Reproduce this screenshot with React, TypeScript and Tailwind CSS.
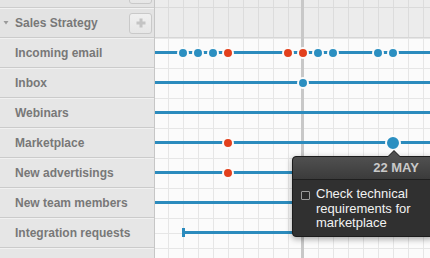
import React from "react";

type Dot = { x: number; c: "b" | "r" | "B" };
type Row = { name: string; dots?: Dot[]; start?: number; line?: boolean };

const rows: Row[] = [
  {
    name: "Incoming email",
    line: true,
    dots: [
      { x: 28, c: "b" },
      { x: 43, c: "b" },
      { x: 58, c: "b" },
      { x: 73, c: "r" },
      { x: 133, c: "r" },
      { x: 147.5, c: "r" },
      { x: 162.5, c: "b" },
      { x: 177.5, c: "b" },
      { x: 222.5, c: "b" },
      { x: 237.5, c: "b" },
    ],
  },
  { name: "Inbox", line: true, dots: [{ x: 147.5, c: "b" }] },
  { name: "Webinars", line: true },
  { name: "Marketplace", line: true, dots: [{ x: 73, c: "r" }, { x: 238, c: "B" }] },
  { name: "New advertisings", line: true, dots: [{ x: 73, c: "r" }] },
  { name: "New team members", line: true },
  { name: "Integration requests", line: true, start: 27 },
];

const PlusButton = () => (
  <div className="flex h-[21px] w-[23px] items-center justify-center rounded-[3px] border border-[#c9c9c9] bg-[linear-gradient(#f0f0f0,#e6e6e6)]">
    <svg width="10" height="10" viewBox="0 0 10 10">
      <rect x="3.5" y="0.5" width="3" height="9" fill="#c4c4c4" />
      <rect x="0.5" y="3.5" width="9" height="3" fill="#c4c4c4" />
    </svg>
  </div>
);

const gridBg =
  "bg-[linear-gradient(to_right,#e6e6e6_1px,transparent_1px),linear-gradient(to_bottom,#e6e6e6_1px,transparent_1px)] bg-[size:15px_15px] bg-[position:13px_0px]";

export default function App() {
  return (
    <div className="relative flex h-[258px] w-[430px] overflow-hidden bg-[#f2f2f2] font-['Liberation_Sans',Arial,sans-serif]">
      {/* Sidebar */}
      <div className="flex w-[155px] shrink-0 flex-col border-r border-[#c6c6c6] bg-[#e6e6e6]">
        <div className="-mt-[22px] flex h-[30px] shrink-0 items-center justify-end border-b border-[#cdcdcd] bg-[#e4e4e4] pr-[2px] pt-[1px]">
          <PlusButton />
        </div>
        <div className="flex h-[30px] shrink-0 items-center border-b border-[#cbcbcb] border-t border-t-[#f2f2f2] bg-[#e3e3e3] pr-[2px]">
          <svg width="15" height="10" viewBox="0 0 15 10" className="shrink-0">
            <path d="M3.5 3 L8.5 3 L6 6.5 Z" fill="#9a9a9a" />
          </svg>
          <span className="flex-1 text-[12px] font-bold text-[#787878]">Sales Strategy</span>
          <PlusButton />
        </div>
        {rows.map((r) => (
          <div
            key={r.name}
            className="flex h-[30px] shrink-0 items-center border-b border-[#cbcbcb] border-t border-t-[#f1f1f1] pl-[15px] text-[12px] font-bold text-[#787878]"
          >
            {r.name}
          </div>
        ))}
        <div className="h-[30px] shrink-0 border-t border-t-[#f1f1f1]" />
      </div>

      {/* Timeline */}
      <div className="relative flex flex-1 flex-col">
        {/* header */}
        <div className="h-[38px] shrink-0 border-b border-[#d6d6d6] bg-[#ececec] bg-[linear-gradient(to_right,#dcdcdc_1px,transparent_1px)] bg-[size:15px_15px] bg-[position:13px_0px]">
          <div className="h-[8px] border-b border-[#dadada]" />
        </div>
        {/* rows */}
        <div className={`relative flex flex-1 flex-col bg-[#fbfbfb] ${gridBg}`}>
          {/* today line */}
          <div className="absolute -top-[38px] bottom-0 left-[146px] w-[3px] bg-[#c8c8c8]" />
          {rows.map((r) => (
            <div key={r.name} className="relative h-[30px] shrink-0">
              {r.line && (
                <div
                  className="absolute right-0 top-[13px] h-[3px] bg-[#2b8bbd]"
                  style={{ left: r.start ?? 0 }}
                />
              )}
              {r.start !== undefined && (
                <div
                  className="absolute top-[10px] h-[9px] w-[3px] bg-[#2b8bbd]"
                  style={{ left: r.start }}
                />
              )}
              {r.dots?.map((d, i) =>
                d.c === "B" ? (
                  <div
                    key={i}
                    className="absolute top-[6.5px] h-[16px] w-[16px] rounded-full border-2 border-[#fbfbfb] bg-[#2b8fc1]"
                    style={{ left: d.x - 8 }}
                  />
                ) : (
                  <div
                    key={i}
                    className={`absolute top-[8.5px] h-[12px] w-[12px] rounded-full border-2 border-[#fbfbfb] ${
                      d.c === "r" ? "bg-[#e2401d]" : "bg-[#2b8fc1]"
                    }`}
                    style={{ left: d.x - 6 }}
                  />
                )
              )}
            </div>
          ))}
        </div>

        {/* tooltip */}
        <div className="absolute left-[137px] top-[156px] w-[142px] rounded-[4px] border border-[#1c1c1c] bg-[#303030] shadow-[0_2px_6px_rgba(0,0,0,0.35)]">
          <div className="absolute -top-[7px] left-[94px] h-0 w-0 border-x-[7px] border-b-[7px] border-x-transparent border-b-[#1c1c1c]" />
          <div className="absolute -top-[6px] left-[95px] h-0 w-0 border-x-[6px] border-b-[6px] border-x-transparent border-b-[#505050]" />
          <div className="flex h-[23px] items-center justify-end rounded-t-[4px] border-b border-[#1f1f1f] bg-[linear-gradient(#505050,#3b3b3b)] pr-[14px] text-[13px] font-bold text-[#c9c9c9]">
            22 MAY
          </div>
          <div className="flex items-start gap-[6px] pb-[5px] pl-[8px] pt-[7px]">
            <div className="mt-[4px] h-[9px] w-[9px] shrink-0 rounded-[1px] border border-[#9a9a9a] bg-[#2a2a2a]" />
            <div className="w-[104px] text-[13px] leading-[14.5px] text-[#f2f2f2]">
              Check technical requirements for marketplace
            </div>
          </div>
        </div>
      </div>
    </div>
  );
}
